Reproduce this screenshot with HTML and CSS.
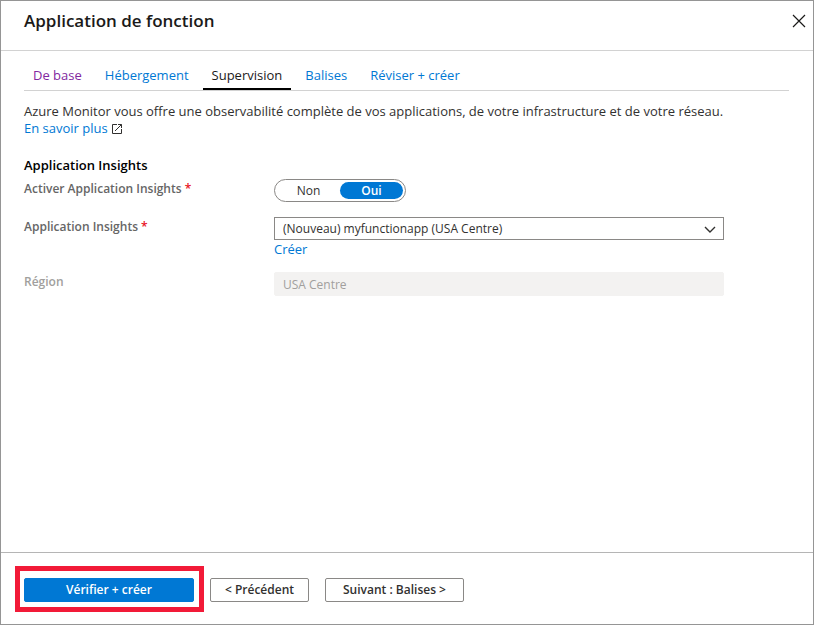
FILE: index.html
```html
<!DOCTYPE html>
<html lang="fr">
<head>
<meta charset="utf-8">
<meta name="viewport" content="width=device-width, initial-scale=1">
<title>Application de fonction</title>
<link rel="stylesheet" href="styles.css">
</head>
<body>
<div class="blade">
  <header class="header">
    <h1 class="title">Application de fonction</h1>
    <button class="close" type="button" aria-label="Fermer">
      <svg width="14" height="14" viewBox="0 0 14 14"><path d="M1 1L13 13M13 1L1 13" fill="none" stroke="#1b1a19" stroke-width="1.2"/></svg>
    </button>
  </header>
  <main class="content">
    <nav class="tabs">
      <a class="tab visited" href="#base">De base</a>
      <a class="tab" href="#hebergement">Hébergement</a>
      <a class="tab active" href="#supervision" aria-current="page">Supervision</a>
      <a class="tab" href="#balises">Balises</a>
      <a class="tab" href="#creer">Réviser + créer</a>
    </nav>
    <p class="intro">Azure Monitor vous offre une observabilité complète de vos applications, de votre infrastructure et de votre réseau.<br>
      <a class="link" href="#savoir">En savoir plus</a>
      <svg class="external" width="12" height="12" viewBox="0 0 12 12"><path d="M6 1.5H1.5V10.5H10.5V6M7 1.5H10.5V5M10.5 1.5L4 8" fill="none" stroke="#323130"/></svg>
    </p>
    <form class="form">
      <h2 class="section">Application Insights</h2>
      <div class="row">
        <span class="label" id="enable">Activer Application Insights <span class="required">*</span></span>
        <div class="toggle" role="radiogroup" aria-labelledby="enable">
          <label class="option"><input type="radio" name="insights"><span>Non</span></label>
          <label class="option"><input type="radio" name="insights" checked><span>Oui</span></label>
        </div>
      </div>
      <div class="row">
        <label class="label" for="resource">Application Insights <span class="required">*</span></label>
        <div class="control">
          <div class="dropdown">
            <select id="resource" class="field"><option>(Nouveau) myfunctionapp (USA Centre)</option></select>
            <svg class="chevron" width="12" height="8" viewBox="0 0 12 8"><path d="M1 2L6 7L11 2" fill="none" stroke="#323130" stroke-width="1.4"/></svg>
          </div>
          <a class="link" href="#nouveau">Créer</a>
        </div>
      </div>
      <div class="row">
        <label class="label muted" for="region">Région</label>
        <input id="region" class="field readonly" value="USA Centre" disabled>
      </div>
    </form>
  </main>
  <footer class="footer">
    <div class="highlight"><button class="button primary" type="button">Vérifier + créer</button></div>
    <button class="button previous" type="button">&lt; Précédent</button>
    <button class="button next" type="button">Suivant : Balises &gt;</button>
  </footer>
</div>
</body>
</html>
```
FILE: styles.css
```css
* { box-sizing: border-box; }

body {
  margin: 0;
  background: #fff;
  color: #323130;
  font: 13px/16px "Open Sans", "Noto Sans", sans-serif;
}

button, input, select { font: inherit; }

.blade {
  display: flex;
  flex-direction: column;
  min-height: 100vh;
  border: 1px solid #959595;
}

.header {
  display: flex;
  align-items: center;
  justify-content: space-between;
  height: 50px;
  padding: 0 7px 9px 23px;
  border-bottom: 1px solid #d2d2d2;
}

.title {
  margin: 0;
  color: #1b1a19;
  font-size: 17px;
  font-weight: 600;
  line-height: 24px;
}

.close {
  display: flex;
  padding: 0;
  border: 0;
  background: none;
}

.content {
  flex: 1;
  padding: 12px 24px 24px 23px;
}

.tabs {
  display: flex;
  gap: 5px;
  height: 28px;
  border-bottom: 1px solid #d2d2d2;
}

.tab {
  padding: 0 9px;
  color: #0078d4;
  line-height: 25px;
  text-decoration: none;
}

.visited { color: #8228a0; }

.active {
  border-bottom: 2px solid #000;
  color: #1b1a19;
}

.intro {
  margin: 12px 0 20px;
  line-height: 17px;
}

.link {
  color: #0078d4;
  text-decoration: none;
}

.external { vertical-align: -2px; }

.section {
  margin: 0 0 6px;
  color: #000;
  font-size: 13px;
  font-weight: 600;
  line-height: 16px;
}

.row {
  display: grid;
  grid-template-columns: 250px minmax(0, 450px);
  align-items: start;
  margin-bottom: 15px;
}

.label {
  padding-top: 2px;
  color: #666;
  font-size: 12px;
  font-weight: 600;
}

.muted { color: #a19f9d; }
.required { color: #e81123; }

.toggle {
  display: flex;
  justify-self: start;
  width: 132px;
  height: 23px;
  padding: 2px;
  border: 1px solid #8a8886;
  border-radius: 12px;
  font-size: 12px;
}

.option {
  display: flex;
  flex: 1;
}

.option input {
  width: 0;
  height: 0;
  margin: 0;
  appearance: none;
}

.option span {
  flex: 1;
  border-radius: 9px;
  line-height: 17px;
  text-align: center;
}

.option input:checked + span {
  background: #0078d4;
  color: #fff;
  font-weight: 600;
}

.control .link {
  display: block;
  margin-top: 1px;
}

.dropdown {
  display: grid;
  align-items: center;
}

.dropdown > * { grid-area: 1 / 1; }

.chevron {
  justify-self: end;
  margin-right: 8px;
  pointer-events: none;
}

.field {
  width: 100%;
  height: 23px;
  padding: 0 8px;
  border: 1px solid #8a8886;
  border-radius: 0;
  background: #fff;
  color: #323130;
  font-size: 12px;
  appearance: none;
}

.readonly {
  height: 24px;
  border-color: #f3f2f1;
  border-radius: 2px;
  background: #f3f2f1;
  color: #a19f9d;
}

.footer {
  display: flex;
  align-items: baseline;
  height: 72px;
  padding: 13px 0 0 14px;
  border-top: 1px solid #b5b5b5;
}

.highlight {
  padding: 7px 5px 5px 4px;
  border: 5px solid #f21a38;
}

.button {
  height: 24px;
  padding: 0;
  border: 1px solid #8a8886;
  border-radius: 2px;
  background: #fff;
  color: #323130;
  font-size: 12px;
  font-weight: 600;
}

.primary {
  display: block;
  width: 170px;
  border-color: #0078d4;
  background: #0078d4;
  color: #fff;
}

.previous {
  width: 99px;
  margin-left: 6px;
}

.next {
  width: 139px;
  margin-left: 16px;
}
```
